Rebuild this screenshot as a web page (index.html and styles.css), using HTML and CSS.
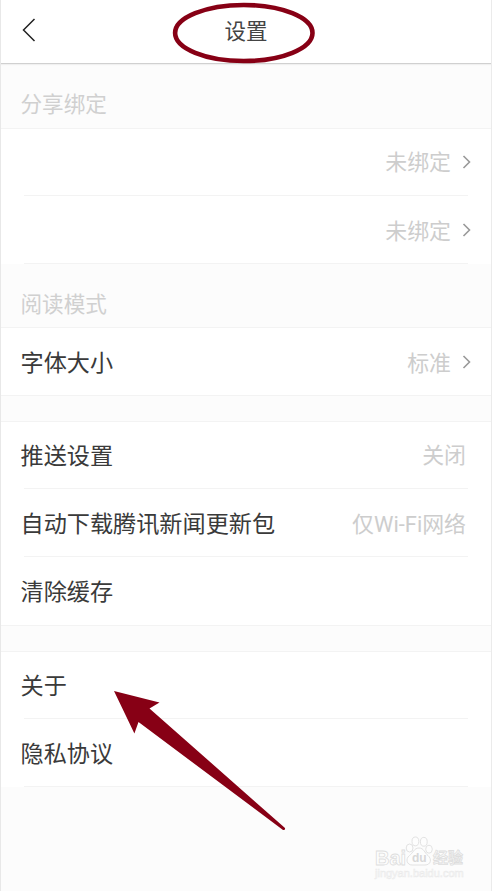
FILE: index.html
```html
<!DOCTYPE html>
<html lang="zh-CN">

<head>
    <meta charset="UTF-8">
    <meta name="viewport" content="width=device-width, initial-scale=1.0">
    <title>设置</title>
    <link rel="stylesheet" href="styles.css">
</head>

<body>
    <div class="page">
        <header class="header">
            <svg class="back" width="16" height="26" viewBox="0 0 16 26">
                <path d="M13.5 2 L2.5 13 L13.5 24" />
            </svg>
            <h1>设置</h1>
            <svg class="circle" width="144" height="62" viewBox="0 0 144 62">
                <ellipse cx="71.8" cy="31" rx="68.7" ry="28" />
            </svg>
        </header>

        <h2 class="section-title">分享绑定</h2>
        <ul class="list">
            <li class="row first">
                <span class="value">未绑定</span>
                <svg class="next" width="10" height="16" viewBox="0 0 10 16"><path d="M2.5 2 L8.5 8 L2.5 14" /></svg>
            </li>
            <li class="row">
                <span class="value">未绑定</span>
                <svg class="next" width="10" height="16" viewBox="0 0 10 16"><path d="M2.5 2 L8.5 8 L2.5 14" /></svg>
            </li>
        </ul>

        <h2 class="section-title reading">阅读模式</h2>
        <ul class="list full">
            <li class="row">
                <span class="label">字体大小</span>
                <span class="value">标准</span>
                <svg class="next" width="10" height="16" viewBox="0 0 10 16"><path d="M2.5 2 L8.5 8 L2.5 14" /></svg>
            </li>
        </ul>

        <div class="gap"></div>
        <ul class="list full">
            <li class="row first">
                <span class="label">推送设置</span>
                <span class="value">关闭</span>
            </li>
            <li class="row">
                <span class="label">自动下载腾讯新闻更新包</span>
                <span class="value">仅Wi-Fi网络</span>
            </li>
            <li class="row cache">
                <span class="label">清除缓存</span>
            </li>
        </ul>

        <div class="gap"></div>
        <ul class="list">
            <li class="row first">
                <span class="label">关于</span>
            </li>
            <li class="row">
                <span class="label">隐私协议</span>
            </li>
        </ul>

        <svg class="arrow" width="174" height="142" viewBox="0 0 174 142">
            <path d="M1 1 L46.5 12.5 L36.5 18.5 L172 138 Q172.5 140.5 170 140 L25.5 32 L21.4 43.5 Z" />
        </svg>

        <div class="watermark">
            <div class="logo">
                <span class="bai">Bai</span>
                <span class="paw">
                    <svg width="28" height="30" viewBox="0 0 28 30">
                        <ellipse cx="4.6" cy="12" rx="3.4" ry="4" />
                        <ellipse cx="10.4" cy="5.4" rx="3.4" ry="4.4" />
                        <ellipse cx="18.8" cy="5.8" rx="3.4" ry="4.4" />
                        <ellipse cx="24" cy="13.2" rx="3.3" ry="4" />
                        <path d="M14 12 C9 12 8 17 4.5 19.5 C0 23 2 29 7 29 H20 C26 29 27 23 23 19.5 C19.5 17 19 12 14 12 Z" />
                    </svg>
                    <b>du</b>
                </span>
                <span class="cn">经验</span>
            </div>
            <div class="site">jingyan.baidu.com</div>
        </div>
    </div>
</body>

</html>
```

FILE: styles.css
```css
* {
    box-sizing: border-box;
    margin: 0;
    padding: 0;
}

body {
    background-color: #fcfcfc;
    font-family: "Noto Sans CJK SC", sans-serif;
}

.page {
    position: relative;
    height: 891px;
    border-left: 1px solid #e8e8e8;
    border-right: 1px solid #ebebeb;
    overflow: hidden;
}

.header {
    position: relative;
    height: 64px;
    display: flex;
    align-items: center;
    justify-content: center;
    padding-bottom: 4px;
    background-color: #fff;
    border-bottom: 1px solid #d0d0d0;
    box-shadow: 0 1px 1px #f0f0f0;
}

.header h1 {
    font-size: 21.5px;
    font-weight: 400;
    color: #444;
}

.back {
    position: absolute;
    left: 19.5px;
    top: 17px;
}

.back path {
    fill: none;
    stroke: #222;
    stroke-width: 1.5;
}

.circle {
    position: absolute;
    left: 171px;
    top: 2px;
}

.circle ellipse {
    fill: none;
    stroke: #870015;
    stroke-width: 4.6;
}

.section-title {
    height: 65px;
    padding: 13px 19.5px 0;
    line-height: 52px;
    font-size: 21.6px;
    font-weight: 400;
    color: #d0d0d0;
    border-bottom: 1px solid #f3f3f3;
}

.reading {
    height: 64px;
}

.list {
    list-style: none;
    background-color: #fff;
}

.row {
    position: relative;
    height: 68px;
    display: flex;
    align-items: center;
    padding: 0 20px 0 19.5px;
}

.row.first {
    height: 67px;
    padding-bottom: 2px;
}

.row.cache {
    height: 69px;
    padding-bottom: 1px;
}

.row::after {
    content: "";
    position: absolute;
    left: 23px;
    right: 23px;
    bottom: 0;
    height: 1px;
    background-color: #f3f3f3;
}

.full .row:last-child::after {
    left: 0;
    right: 0;
}

.label {
    padding-bottom: 2px;
    font-size: 23.15px;
    color: #3a3a3a;
}

.value {
    margin-left: auto;
    margin-right: 5px;
    padding-bottom: 2px;
    font-family: Roboto, "Noto Sans CJK SC", sans-serif;
    font-size: 21.9px;
    color: #cdcdcd;
}

.value:has(+ .next) {
    margin-right: 10px;
}

.next path {
    fill: none;
    stroke: #999;
    stroke-width: 1.6;
}

.gap {
    height: 26px;
    border-bottom: 1px solid #f3f3f3;
}

.arrow {
    position: absolute;
    left: 112px;
    top: 690px;
}

.arrow path {
    fill: #870015;
}

.watermark {
    position: absolute;
    left: 374px;
    top: 836px;
    width: 96px;
    font-family: "Liberation Sans", "Noto Sans CJK SC", sans-serif;
    color: #fdfdfd;
    -webkit-text-stroke: 0.8px #dedede;
}

.logo {
    display: flex;
    align-items: flex-end;
    height: 30px;
    line-height: 16px;
    font-weight: bold;
}

.bai {
    width: 30px;
    font-size: 20px;
}

.paw {
    position: relative;
    width: 28px;
    height: 30px;
}

.paw svg {
    fill: #fdfdfd;
    stroke: #e2e2e2;
}

.paw b {
    position: absolute;
    left: 7px;
    bottom: 0;
    font-size: 12px;
    color: #d8d8d8;
    -webkit-text-stroke: 0;
}

.cn {
    font-size: 15px;
    color: #f8f8f8;
}

.site {
    font-size: 11px;
    line-height: 14px;
    color: #fafafa;
    -webkit-text-stroke: 0.5px #eaeaea;
}
```
